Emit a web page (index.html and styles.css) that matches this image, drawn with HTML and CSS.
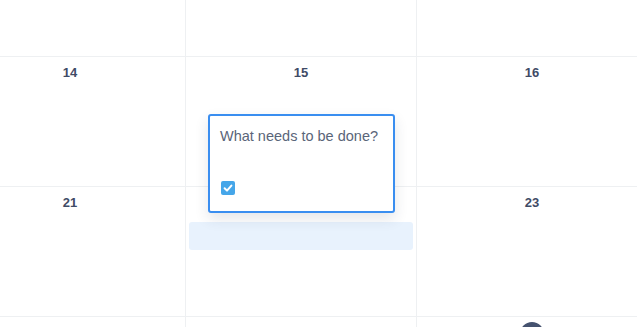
FILE: index.html
```html
<!DOCTYPE html>
<html>
<head>
<meta charset="utf-8">
<link rel="stylesheet" href="styles.css">
</head>
<body>
<div class="viewport">
  <div class="calendar">
    <div class="cell"></div>
    <div class="cell"></div>
    <div class="cell"></div>
    <div class="cell"></div>

    <div class="cell"><span class="day">14</span></div>
    <div class="cell"><span class="day">15</span></div>
    <div class="cell"><span class="day">16</span></div>
    <div class="cell"></div>

    <div class="cell"><span class="day">21</span></div>
    <div class="cell"><span class="day">22</span><div class="event-placeholder"></div></div>
    <div class="cell"><span class="day">23</span></div>
    <div class="cell"></div>

    <div class="cell"></div>
    <div class="cell"></div>
    <div class="cell"><span class="day today"></span></div>
    <div class="cell"></div>

    <div class="popup">
      <div class="popup-text">What needs to be done?</div>
      <span class="checkbox">
        <svg width="14" height="14" viewBox="0 0 14 14"><path d="M3.6 7.3 L6 9.6 L10.4 4.6" fill="none" stroke="#fff" stroke-width="2" stroke-linecap="round" stroke-linejoin="round"/></svg>
      </span>
    </div>
  </div>
</div>
</body>
</html>
```

FILE: styles.css
```css
html, body {
  margin: 0;
  padding: 0;
  background: #ffffff;
}

.viewport {
  width: 637px;
  height: 327px;
  overflow: hidden;
  position: relative;
}

.calendar {
  position: relative;
  margin-top: -73px;
  margin-left: -45px;
  display: grid;
  grid-template-columns: repeat(4, 231px);
  grid-template-rows: repeat(4, 130px);
  font-family: "Liberation Sans", Arial, sans-serif;
}

.cell {
  box-sizing: border-box;
  border-right: 1px solid #eef0f2;
  border-bottom: 1px solid #eef0f2;
  display: flex;
  flex-direction: column;
  align-items: center;
  padding-top: 7px;
  padding-left: 3px;
  padding-right: 3px;
}

.day {
  font-size: 13px;
  font-weight: bold;
  color: #3f4b66;
  line-height: 18px;
  height: 24px;
  min-width: 24px;
  display: flex;
  align-items: center;
  justify-content: center;
  margin-top: -3px;
}

.day.today {
  width: 24px;
  margin-top: -2px;
  border-radius: 50%;
  background: #45526f;
  color: #ffffff;
}

.event-placeholder {
  align-self: stretch;
  height: 28px;
  margin-top: 7px;
  background: #e8f2fd;
  border-radius: 3px;
}

.popup {
  position: absolute;
  left: 253px;
  top: 187px;
  width: 187px;
  height: 99px;
  box-sizing: border-box;
  border: 2px solid #3a8ef0;
  border-radius: 3px;
  background: #ffffff;
  box-shadow: 0 6px 14px rgba(40, 50, 70, 0.12);
  padding: 9px 10px 0 10px;
  display: flex;
  flex-direction: column;
}

.popup-text {
  font-size: 14.5px;
  line-height: 22px;
  color: #5a6579;
}

.checkbox {
  margin-top: 34px;
  margin-left: 1px;
  width: 14px;
  height: 14px;
  border-radius: 2px;
  background: #45a6e9;
  display: block;
}

.checkbox svg {
  display: block;
}
```
